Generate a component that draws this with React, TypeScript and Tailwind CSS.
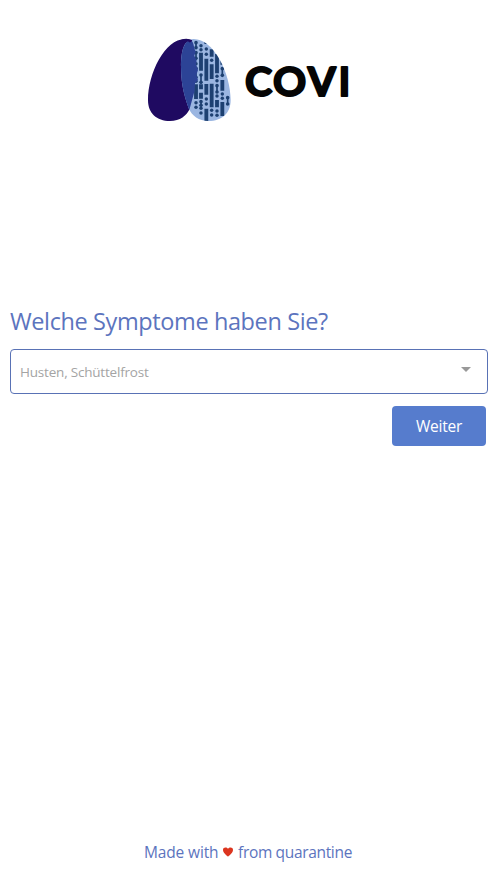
const bars: [number, number, number][] = [
  [183, 68, 122], [199, 30, 42], [199, 86, 152], [215, 58, 80], [215, 103, 147], [231, 72, 130],
  [247, 80, 104], [247, 150, 182], [168, 163, 207], [183, 163, 178], [199, 162, 194],
  [199, 236, 274], [215, 161, 232], [231, 210, 232], [247, 216, 258], [183, 188, 206],
];
const dots: [number, number][] = [
  [183, 47], [183, 59], [199, 57], [199, 73], [215, 47], [215, 91], [231, 139], [231, 152], [247, 192],
  [247, 205], [199, 207], [199, 222], [215, 241], [215, 255], [168, 218], [168, 232],
  [183, 235], [183, 249], [231, 243], [231, 256], [168, 101], [168, 154], [231, 198],
];
const dumbbells: [number, number, number][] = [
  [168, 38, 53], [168, 68, 85], [183, 135, 157], [247, 116, 136], [231, 167, 186],
  [263, 203, 222], [183, 215, 226], [168, 115, 142],
];

function Logo() {
  return (
    <svg width="216" height="100" viewBox="140 30 216 100" className="shrink-0" role="img" aria-label="COVI">
      <g transform="translate(140 30) scale(.33333)">
        <defs>
          <clipPath id="right-lobe">
            <path d="M161 27C126 27 123 80 123 110C123 170 136 205 146 235C156 258 176 273 206 273C246 273 272 250 272 210C272 130 221 27 161 27Z" />
          </clipPath>
        </defs>
        <path fill="#1f0a61" d="M135 27C149 27 158 32 164 50C170 70 166 78 169 95L173 120C173 170 160 205 150 235C140 258 120 273 90 273C50 273 24 250 24 210C24 130 75 27 135 27Z" />
        <path fill="#9bb6e1" d="M161 27C126 27 123 80 123 110C123 170 136 205 146 235C156 258 176 273 206 273C246 273 272 250 272 210C272 130 221 27 161 27Z" />
        <g clipPath="url(#right-lobe)" stroke="#1d4071" fill="#1d4071">
          {bars.map(([x, a, b]) => <path key={`${x}-${a}`} d={`M${x} ${a}V${b}`} strokeWidth="11.5" />)}
          {dots.map(([x, y]) => <circle key={`${x}-${y}`} cx={x} cy={y} r="5.2" stroke="none" />)}
          {dumbbells.map(([x, a, b]) => (
            <g key={`${x}-${a}`}>
              <path d={`M${x} ${a}V${b}`} strokeWidth="5" />
              <circle cx={x} cy={a} r="5.4" stroke="none" />
              <circle cx={x} cy={b} r="5.4" stroke="none" />
            </g>
          ))}
        </g>
        <path fill="#2c4396" clipPath="url(#right-lobe)" d="M148 28C158 32 161 42 163 55L167 65L163 77L170 92L168 103L174 120L169 135L174 150L165 160L163 185L148 240L100 235V28Z" />
        <path fill="#1f0a61" d="M124 29Q142 23 157 31Q151 42 144 34Q132 44 124 29Z" />
      </g>
      <g fontFamily="Lato, sans-serif" fontWeight="700" fontSize="40.5" fill="#050505" stroke="#050505" strokeWidth="2" strokeLinejoin="round">
        <text x="244.9" y="95.9" textLength="27.2" lengthAdjust="spacingAndGlyphs">C</text>
        <text x="273" y="95.9" textLength="33.2" lengthAdjust="spacingAndGlyphs">O</text>
        <text x="307.8" y="95.9" textLength="28" lengthAdjust="spacingAndGlyphs">V</text>
        <text x="338.6" y="95.9" textLength="11.8" lengthAdjust="spacingAndGlyphs">I</text>
      </g>
    </svg>
  );
}

export default function App() {
  return (
    <div className="flex h-[877px] w-full flex-col overflow-hidden bg-white font-['Open_Sans','Noto_Sans',sans-serif] text-[#5c74be]">
      <header className="flex pt-[30px] pl-[140px]"><Logo /></header>
      <main className="mt-[173px] px-[10px]">
        <h1 className="h-9 whitespace-nowrap text-[23.5px] leading-9 tracking-[-0.39px]">Welche Symptome haben Sie?</h1>
        <div className="mt-[10px] flex h-[45px] w-[478px] items-center justify-between rounded-[4px] border border-[#5972b5] pr-[16px] pl-[9px]">
          <span className="pt-px text-[13.5px] tracking-[-0.2px] text-[#a4a4a4]">Husten, Schüttelfrost</span>
          <svg width="10" height="5" viewBox="0 0 10 5" className="mb-1"><path d="M0 0H10L5 5Z" fill="#999" /></svg>
        </div>
        <div className="mt-3 flex justify-end">
          <button className="mr-[-2px] h-10 w-[94px] rounded-[4px] bg-[#567ccd] pt-px text-[15.5px] tracking-[-0.25px] text-white">Weiter</button>
        </div>
      </main>
      <footer className="mt-auto mb-[13px] flex h-6 items-center whitespace-nowrap pl-[144px] text-[15.5px] leading-6">
        <span className="w-[74px] tracking-[-0.15px]">Made with</span>
        <svg width="10" height="10" viewBox="0 0 10 10" className="mx-[5px]"><path fill="#dc351f" d="M5 9.8C3.5 8.2 0 6 0 2.8C0 .2 3.5-.4 5 1.8C6.5-.4 10 .2 10 2.8C10 6 6.5 8.2 5 9.8Z" /></svg>
        <span className="tracking-[-0.33px]">from quarantine</span>
      </footer>
    </div>
  );
}
